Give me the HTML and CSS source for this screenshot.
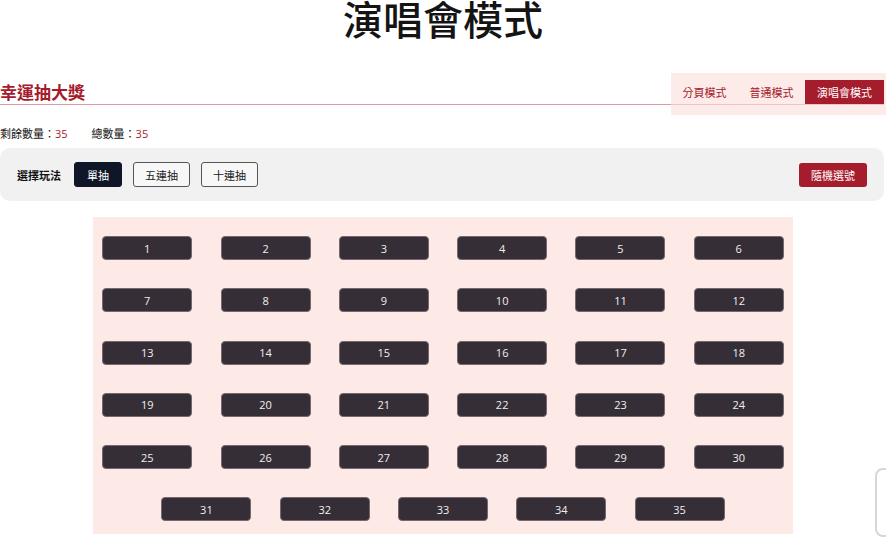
FILE: index.html
```html
<!DOCTYPE html>
<html lang="zh-Hant">
<head>
<meta charset="utf-8">
<title>演唱會模式</title>
<link rel="stylesheet" href="styles.css">
</head>
<body>
<div class="page">
  <h1 class="page-title">演唱會模式</h1>

  <div class="header">
    <h2 class="header-title">幸運抽大獎</h2>
    <div class="tabs">
      <span class="tab">分頁模式</span>
      <span class="tab">普通模式</span>
      <span class="tab tab-active">演唱會模式</span>
    </div>
  </div>

  <div class="stats">
    <span class="stat">剩餘數量：<em>35</em></span>
    <span class="stat">總數量：<em>35</em></span>
  </div>

  <div class="panel">
    <div class="panel-left">
      <span class="panel-label">選擇玩法</span>
      <button class="mode mode-active">單抽</button>
      <button class="mode">五連抽</button>
      <button class="mode">十連抽</button>
    </div>
    <button class="random">隨機選號</button>
  </div>

  <div class="seats">
    <button class="seat">1</button>
    <button class="seat">2</button>
    <button class="seat">3</button>
    <button class="seat">4</button>
    <button class="seat">5</button>
    <button class="seat">6</button>
    <button class="seat">7</button>
    <button class="seat">8</button>
    <button class="seat">9</button>
    <button class="seat">10</button>
    <button class="seat">11</button>
    <button class="seat">12</button>
    <button class="seat">13</button>
    <button class="seat">14</button>
    <button class="seat">15</button>
    <button class="seat">16</button>
    <button class="seat">17</button>
    <button class="seat">18</button>
    <button class="seat">19</button>
    <button class="seat">20</button>
    <button class="seat">21</button>
    <button class="seat">22</button>
    <button class="seat">23</button>
    <button class="seat">24</button>
    <button class="seat">25</button>
    <button class="seat">26</button>
    <button class="seat">27</button>
    <button class="seat">28</button>
    <button class="seat">29</button>
    <button class="seat">30</button>
    <button class="seat">31</button>
    <button class="seat">32</button>
    <button class="seat">33</button>
    <button class="seat">34</button>
    <button class="seat">35</button>
  </div>
</div>
<div class="badge"></div>
</body>
</html>
```

FILE: styles.css
```css
* { box-sizing: border-box; }

html, body {
  margin: 0;
  padding: 0;
  background: #ffffff;
  overflow: hidden;
}

body {
  font-family: "Noto Sans CJK TC", "Noto Sans", sans-serif;
  color: #111111;
}

.page {
  width: 886px;
}

.page-title {
  margin: 0 0 44px;
  height: 36px;
  line-height: 36px;
  font-size: 40px;
  font-weight: 500;
  text-align: center;
  color: #141414;
}

.header {
  position: relative;
  margin-right: 2px;
  height: 25px;
  border-bottom: 1px solid #dc9ca2;
}

.header-title {
  margin: 0;
  height: 24px;
  line-height: 24px;
  font-size: 17px;
  font-weight: 700;
  color: #a51c2c;
}

.tabs {
  position: absolute;
  right: -2px;
  top: -7px;
  display: flex;
  padding: 7px 2px 11px 0;
  background: rgba(252, 222, 218, 0.6);
}

.tab {
  height: 24px;
  line-height: 24px;
  padding: 0 11.5px;
  font-size: 11px;
  color: #a51c2c;
}

.tab-active {
  padding: 0 12px;
  background: #a51c2c;
  color: #ffffff;
}

.stats {
  display: flex;
  gap: 24px;
  margin: 20px 0 6px;
  line-height: 16px;
  font-size: 11px;
  color: #111111;
}

.stat em {
  font-style: normal;
  font-family: "Open Sans", "Noto Sans", sans-serif;
  color: #a51c2c;
}

.panel {
  display: flex;
  align-items: center;
  justify-content: space-between;
  margin-right: 2px;
  height: 53px;
  padding: 0 17px;
  background: #f1f1f1;
  border-radius: 10px;
}

.panel-left {
  display: flex;
  align-items: center;
  gap: 11px;
}

.panel-label {
  font-size: 11px;
  font-weight: 700;
  margin-right: 2px;
}

.mode {
  height: 25px;
  padding: 0 11px;
  font-family: "Noto Sans CJK TC", sans-serif;
  font-size: 11px;
  color: #222222;
  background: #f7f7f7;
  border: 1px solid #555555;
  border-radius: 3px;
}

.mode-active {
  padding: 0 12px;
  background: #0e1628;
  border-color: #0e1628;
  color: #ffffff;
}

.random {
  height: 24px;
  padding: 0 12px;
  font-family: "Noto Sans CJK TC", sans-serif;
  font-size: 11px;
  color: #ffffff;
  background: #a51c2c;
  border: none;
  border-radius: 3px;
}

.seats {
  display: flex;
  flex-wrap: wrap;
  justify-content: center;
  column-gap: 28.3px;
  row-gap: 28.3px;
  width: 700px;
  margin: 16px auto 0;
  padding: 19px 0 13px;
  background: #fde9e6;
}

.seat {
  width: 90px;
  height: 24px;
  padding: 0;
  font-family: "Open Sans", "Noto Sans", sans-serif;
  font-size: 11px;
  color: #f2eef0;
  background: #352e36;
  border: 1px solid #75686f;
  border-radius: 4px;
}

.badge {
  position: fixed;
  left: 875px;
  top: 468px;
  width: 80px;
  height: 69px;
  background: #ffffff;
  border: 2px solid #d6d6d6;
  border-radius: 8px;
}
```
